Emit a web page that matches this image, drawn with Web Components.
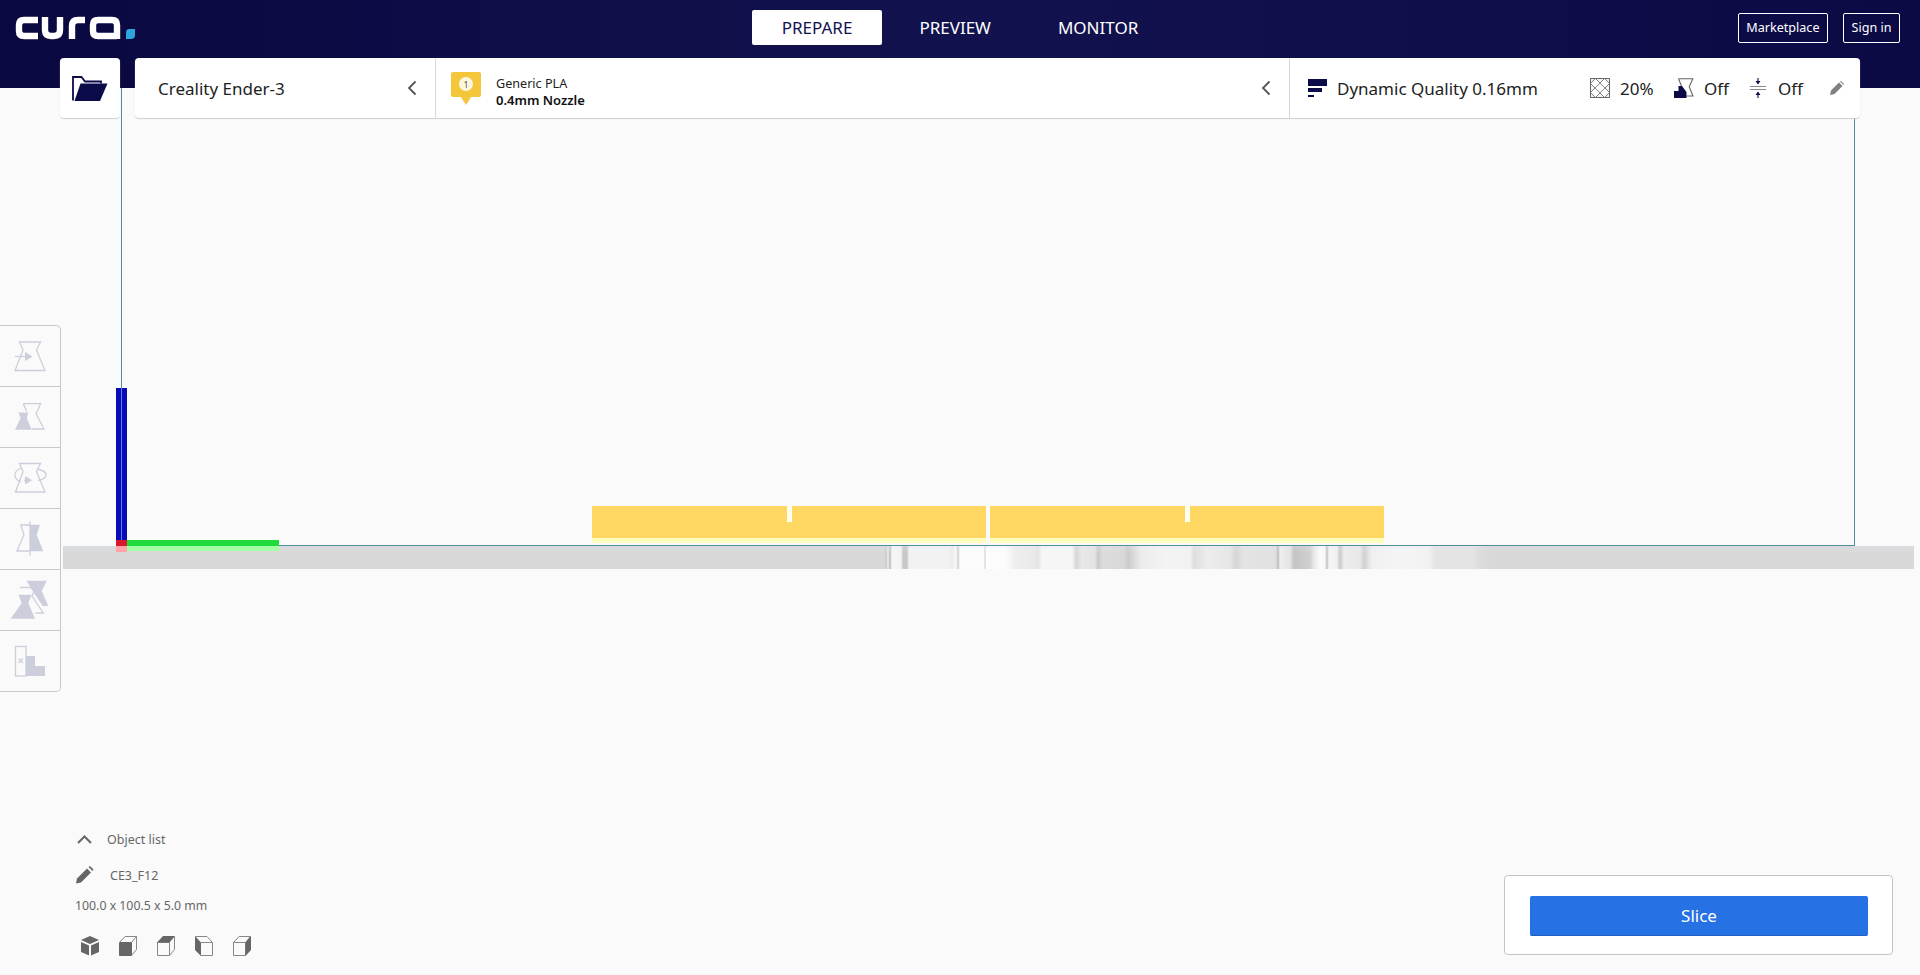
<!DOCTYPE html>
<html lang="en"><head><meta charset="utf-8"><title>Cura</title>
<style>
html,body{margin:0;height:100%;overflow:hidden;background:#fafafa;font-family:"Noto Sans","Open Sans",sans-serif}
</style></head><body>
<template id="t-app"><style>
:host{display:block;position:relative;width:100%;height:100vh;overflow:hidden;background:#fafafa;font-family:"Noto Sans","Open Sans",sans-serif}
</style><slot></slot></template>

<template id="t-header"><style>
:host{display:grid;grid-template-columns:1fr auto 1fr;align-items:start;height:88px;box-sizing:border-box;position:relative;background:linear-gradient(90deg,#09083f 0%,#12124f 50%,#0b0a45 100%)}
.logo{padding:16px 0 0 15px}
.nav{display:flex;gap:7px;padding-top:10px}
.acc{display:flex;justify-content:flex-end;gap:15px;padding:13px 20px 0 0}
</style><div class="logo"><slot name="logo"></slot></div><div class="nav"><slot name="nav"></slot></div><div class="acc"><slot name="account"></slot></div></template>

<template id="t-tab"><style>
:host{display:block;height:35px;line-height:35px;padding:0 30px;font-size:17px;color:#fff;border-radius:2px}
:host([active]){background:#fff;color:#12124f}
</style><slot></slot></template>

<template id="t-acc"><style>
:host{display:block;height:30px;line-height:28px;box-sizing:border-box;padding:0 7.5px;border:1px solid #fff;border-radius:2px;color:#fff;font-size:12.6px}
</style><slot></slot></template>

<template id="t-toolbar"><style>
:host{display:flex;position:relative;margin:-30px 0 0 60px;width:1800px;height:60px;gap:15px}
.open{width:60px;height:60px;box-sizing:border-box;background:#fff;border-radius:4px;box-shadow:0 1px 1px #d0d0d0;display:flex;align-items:center;justify-content:center}
.bar{width:1725px;height:60px;box-sizing:border-box;background:#fff;border-radius:4px;box-shadow:0 1px 1px #cfcfcf;display:flex}
</style><div class="open"><slot name="open"></slot></div><div class="bar"><slot></slot></div></template>

<template id="t-section"><style>
:host{display:flex;align-items:center;height:60px;box-sizing:border-box;color:#222}
:host([printer]){width:301px;padding:0 18px 0 23px;justify-content:space-between;font-size:17px;border-right:1px solid #d8d8d8}
:host([material]){width:854px;padding:0 18px 0 15px;justify-content:space-between;border-right:1px solid #d8d8d8}
:host([quality]){flex:1;padding:0 16px 0 18px}
</style><slot></slot></template>

<template id="t-material"><style>
:host{display:flex;align-items:center;gap:15px}
.t{display:flex;flex-direction:column;line-height:17.500px;color:#222;padding-top:8px}
.a{font-size:12.6px}
.n{font-size:13px;font-weight:600;color:#111}
</style><slot name="icon"></slot><div class="t"><span class="a"><slot name="a"></slot></span><span class="n"><slot name="b"></slot></span></div></template>

<template id="t-setting"><style>
:host{display:inline-flex;align-items:center;gap:var(--g,10px);font-size:17px;color:#222;white-space:nowrap}
</style><slot></slot></template>

<template id="t-viewport"><style>
:host{display:block;position:absolute;inset:0;overflow:hidden;background:#fafafa}
div{position:absolute}
.grid{left:63px;top:546px;width:1851px;height:23px}
.grid2{left:0;top:0;right:0;height:6px;background:linear-gradient(180deg,rgba(215,228,250,.22),rgba(255,250,235,.05))}
.vl{top:88px;width:1px;background:#4f8f96;height:458px}
.hl{left:121px;top:545px;width:1734px;height:1px;background:#4f8f96}
.bl{left:116px;top:388px;width:11px;height:152px;background:#0a0ab8}
.bl2{left:121px;top:388px;width:1px;height:152px;background:#5a7fe0}
.rd{left:116px;top:540px;width:11px;height:6px;background:#d81a2a}
.rd2{left:116px;top:546px;width:11px;height:6px;background:#ffa4a8}
.gr{left:127px;top:540px;width:152px;height:6px;background:#1fdc3c}
.gr2{left:127px;top:546px;width:152px;height:5px;background:#a4fca4}
.ye{top:506px;height:32px;background:#ffd763}
.ys{top:538px;height:5px;background:#fdfdc0}
.no{top:505px;height:17px;background:#fdfdf0}
</style>
<div class="grid" id="g"><div class="grid2"></div></div>
<div class="vl" style="left:121px"></div><div class="vl" style="left:1854px"></div>
<div class="ys" style="left:592px;width:394px"></div><div class="ys" style="left:990px;width:394px"></div>
<div class="ye" style="left:592px;width:394px"></div><div class="ye" style="left:990px;width:394px"></div>
<div class="no" style="left:787px;width:5px"></div><div class="no" style="left:1185px;width:5px"></div>
<div class="hl"></div>
<div class="bl"></div><div class="bl2"></div><div class="rd"></div><div class="rd2"></div><div class="gr"></div><div class="gr2"></div>
</template>

<template id="t-tools"><style>
:host{display:flex;flex-direction:column;position:absolute;left:0;top:325px;width:61px;box-sizing:border-box;background:#fafafa;border:1px solid #c9c9c9;border-left:0;border-radius:0 5px 5px 0}
</style><slot></slot></template>

<template id="t-tool"><style>
:host{display:block;height:61px;box-sizing:border-box;border-bottom:1px solid #c9c9c9;overflow:hidden}
:host(:last-child){border-bottom:0;height:60px}
</style><slot></slot></template>

<template id="t-info"><style>
:host{display:flex;flex-direction:column;position:absolute;left:75px;top:826px;width:220px;color:#666;font-size:12.5px}
.r{display:flex;align-items:center}
.a{height:26px;gap:15px;padding-left:2px}
.b{height:34px;margin-top:6px;gap:16px;padding-left:0}
.c{height:26px;margin-top:0;font-size:12.3px}
.d{gap:20px;padding-left:6px;margin-top:17px;height:22px}
</style>
<div class="r a"><slot name="chev"></slot><slot name="title"></slot></div>
<div class="r b"><slot name="pen"></slot><slot name="name"></slot></div>
<div class="r c"><slot name="dim"></slot></div>
<div class="r d"><slot name="cubes"></slot></div></template>

<template id="t-slice"><style>
:host{display:block;position:absolute;left:1504px;top:875px;width:389px;height:80px;box-sizing:border-box;padding:20px 25px;background:#fff;border:1px solid #c4c4c4;border-radius:4px}
.b{height:40px;line-height:39px;box-sizing:border-box;width:338px;text-align:center;color:#fff;font-size:17px;background:#2671e3;border-bottom:1px solid #1f5fc0;border-radius:2px}
</style><div class="b"><slot></slot></div></template>

<cura-app>
  <cura-viewport></cura-viewport>
  <cura-header>
    <svg slot="logo" width="122" height="26" viewBox="0 0 122 26" style="display:block"><g fill="none" stroke="#fff" stroke-width="6.400"><path d="M23 4H9Q4 4 4 9V15Q4 20 9 20H23"/><path d="M30 1V14Q30 20 36 20H39Q45 20 45 14V1"/><path d="M57 23V10Q57 4 63 4H70"/><path d="M102 23V9Q102 4 97 4H83Q78 4 78 9V15Q78 20 83 20H102"/></g><path d="M114 13H120V19Q120 23 116 23H111V17Q111 13 114 13Z" fill="#2da5e0"/></svg>
    <cura-tab slot="nav" active>PREPARE</cura-tab>
    <cura-tab slot="nav">PREVIEW</cura-tab>
    <cura-tab slot="nav">MONITOR</cura-tab>
    <cura-acc slot="account">Marketplace</cura-acc>
    <cura-acc slot="account">Sign in</cura-acc>
  </cura-header>
  <cura-toolbar>
    <svg slot="open" width="36" height="25" viewBox="0 0 36 25"><path d="M1 24.500V1H9.500L13 5.500H29V7.500" fill="none" stroke="#0c0b4a" stroke-width="1.800"/><path d="M2.500 25 8.500 7.500H35.500L28 25Z" fill="#0c0b4a"/></svg>
    <cura-section printer><span>Creality Ender-3</span><svg width="10" height="16" viewBox="0 0 10 16"><path d="M8.500 1.500 2 8l6.500 6.500" fill="none" stroke="#555" stroke-width="1.800"/></svg></cura-section>
    <cura-section material>
      <cura-material>
        <svg slot="icon" width="30" height="33" viewBox="0 0 30 33"><path d="M2 0H28Q30 0 30 2V23Q30 25 28 25H20L15 33 10 25H2Q0 25 0 23V2Q0 0 2 0Z" fill="#f4c63a"/><circle cx="15" cy="12" r="7" fill="#fdf6dc"/><text x="15" y="15.500" font-size="9" text-anchor="middle" fill="#555" font-family="Noto Sans">1</text></svg>
        <span slot="a">Generic PLA</span><span slot="b">0.4mm Nozzle</span>
      </cura-material>
      <svg width="10" height="16" viewBox="0 0 10 16"><path d="M8.500 1.500 2 8l6.500 6.500" fill="none" stroke="#555" stroke-width="1.800"/></svg>
    </cura-section>
    <cura-section quality>
      <cura-setting style="--g:10px;width:282px">
        <svg width="19" height="18" viewBox="0 0 19 18"><path d="M0 0H19V7H0ZM0 9H14V13H0ZM0 16H6V18H0Z" fill="#0c0b4a"/></svg><span>Dynamic Quality 0.16mm</span>
      </cura-setting>
      <cura-setting style="width:84px">
        <svg width="20" height="20" viewBox="0 0 20 20"><rect x=".5" y=".5" width="19" height="19" fill="#f4f4f4" stroke="#666"/><path d="M.5 5.500 5.500.5 10 5 14.500.5 19.500 5.500 15 10 19.500 14.500 14.500 19.500 10 15 5.500 19.500.5 14.500 5 10ZM5 10 10 5 15 10 10 15Z" fill="#fff" stroke="#666" stroke-width=".8"/></svg><span>20%</span>
      </cura-setting>
      <cura-setting style="width:76px">
        <svg width="20" height="20" viewBox="0 0 20 20"><path d="M4.500 .8H18.800L15.200 8.700 19 18H12.500M4.500 .8 7.500 8" fill="none" stroke="#666" stroke-width="1.100"/><path d="M0 20V13H4.500V8H8L12.500 14V20Z" fill="#0c0b4a"/></svg><span>Off</span>
      </cura-setting>
      <cura-setting style="--g:12px;width:80px">
        <svg width="16" height="20" viewBox="0 0 16 20"><path d="M0 8.500H16M0 11.500H16" stroke="#888" stroke-width="1.100"/><path d="M8 0V4M8 16V20" stroke="#0c0b4a" stroke-width="1.100"/><path d="M5.500 3 8 6.500 10.500 3ZM5.500 17 8 13.500 10.500 17Z" fill="#0c0b4a"/></svg><span>Off</span>
      </cura-setting>
      <svg width="14" height="14" viewBox="0 0 14 14" style="margin-left:auto"><path d="M0 14 1 9.500 9 1.500 12.500 5 4.500 13ZM10 .5 11 0 14 3 13.500 4Z" fill="#808080"/></svg>
    </cura-section>
  </cura-toolbar>
  <cura-tools>
    <cura-tool><svg width="60" height="60" viewBox="0 1 60 60" style="display:block" fill="none" stroke="#cdcedb" stroke-width="1.300"><path d="M19.500 17H40.500L36.500 25 45 45.500H15L23 25Z"/><path d="M15 31.500H29"/><path d="M25 27 32.500 31.500 25 36Z" fill="#cdcedb" stroke="none"/></svg></cura-tool>
    <cura-tool><svg width="60" height="60" viewBox="0 1 60 60" style="display:block" fill="none" stroke="#cdcedb" stroke-width="1.300"><path d="M23.300 17.700H40.700L36 27.700 44 43H31.700M23.300 17.700 26.700 25.400"/><path d="M18.300 26.400H28.300L26.700 32 31.700 43.700H15L20.700 32Z" fill="#cdcedb" stroke="none"/></svg></cura-tool>
    <cura-tool><svg width="60" height="60" viewBox="0 1 60 60" style="display:block" fill="none" stroke="#cdcedb" stroke-width="1.300"><path d="M19.500 16.500H40.500L36.500 24.500 45 45H15.500L23 24.500Z"/><path d="M21 21Q14.500 24 15 28.500 15.500 33 21 35M37 22Q46 24 46 27.500 46 32 38 33.500"/><path d="M24 33.300H27"/><path d="M25 29 32 33.300 25 37.500Z" fill="#cdcedb" stroke="none"/></svg></cura-tool>
    <cura-tool><svg width="60" height="60" viewBox="0 1 60 60" style="display:block" fill="none" stroke="#cdcedb" stroke-width="1.300"><path d="M30 17H20.700L24 26.700 17 43H30"/><path d="M30 16.700H40L36.700 26.700 43.300 43.300H30Z" fill="#cdcedb" stroke="none"/><path d="M30 13.500V47.500"/></svg></cura-tool>
    <cura-tool><svg width="60" height="60" viewBox="0 1 60 60" style="display:block" fill="none" stroke="#cdcedb" stroke-width="1.300"><path d="M26.700 11.700H46.700L41.700 22 48.300 37H42.700L36 27 30.700 19Z" fill="#cdcedb" stroke="none"/><path d="M19.800 18.500H36L32 27 43.300 44H35.500"/><path d="M18.300 25.700H31.700L28.300 34 35 49.700H10.700L21.700 34Z" fill="#cdcedb" stroke="none"/></svg></cura-tool>
    <cura-tool><svg width="60" height="60" viewBox="0 1 60 60" style="display:block" fill="none" stroke="#cdcedb" stroke-width="1.300"><rect x="15.500" y="16.500" width="10.500" height="29.500"/><path d="M18.500 28.500 23 33M23 28.500 18.500 33"/><path d="M26 26H35V36H45V46H26Z" fill="#cdcedb" stroke="none"/></svg></cura-tool>
  </cura-tools>
  <cura-info>
    <svg slot="chev" width="15" height="9" viewBox="0 0 15 9"><path d="M1 8 7.500 1.500 14 8" fill="none" stroke="#666" stroke-width="2"/></svg>
    <span slot="title">Object list</span>
    <svg slot="pen" width="19" height="18" viewBox="0 0 19 18"><path d="M1 17.500 2 12.500 12 2.500 16 6.500 6 16.500Z" fill="#666"/><path d="M13.500 1 15 0 18.500 3.500 17.500 5Z" fill="#666"/></svg>
    <span slot="name">CE3_F12</span>
    <span slot="dim">100.0 x 100.5 x 5.0 mm</span>
    <svg slot="cubes" width="18" height="20" viewBox="0 0 18 20"><path d="M9 0 18 4 9 8 0 4ZM0 6 8 9.500V19.500L0 16ZM18 6 10 9.500V19.500L18 16Z" fill="#666"/></svg>
    <svg slot="cubes" width="18" height="20" viewBox="0 0 18 20"><path d="M.5 6.500H12.500V19.500H.5Z" fill="#666" stroke="#666"/><path d="M.5 6.500 6 .5H17.500V13.500L12.500 19.500M12.500 6.500 17.500 .5" fill="none" stroke="#888"/></svg>
    <svg slot="cubes" width="18" height="20" viewBox="0 0 18 20"><path d="M.5 6.500H12.500V19.500H.5ZM12.500 19.500 17.500 13.500V.5" fill="none" stroke="#888"/><path d="M0 6.500 6 0H18L12.500 6.500Z" fill="#666"/></svg>
    <svg slot="cubes" width="18" height="20" viewBox="0 0 18 20"><path d="M0 0 6 6.500V20L0 14Z" fill="#666"/><path d="M6 6.500H17.500V19.500H6M.5 .5H12L17.500 6.500" fill="none" stroke="#888"/></svg>
    <svg slot="cubes" width="18" height="20" viewBox="0 0 18 20"><path d="M.5 6.500H12.500V19.500H.5ZM.5 6.500 6 .5H17.500L12.500 6.500" fill="none" stroke="#888"/><path d="M18 0V14L12.500 20V6.500Z" fill="#666"/></svg>
  </cura-info>
  <cura-slice>Slice</cura-slice>
</cura-app>
<script>
const base=id=>class extends HTMLElement{constructor(){super();this.attachShadow({mode:"open"}).appendChild(document.getElementById(id).content.cloneNode(true))}};
for(const [n,id] of [["cura-app","t-app"],["cura-header","t-header"],["cura-tab","t-tab"],["cura-acc","t-acc"],["cura-toolbar","t-toolbar"],["cura-section","t-section"],["cura-material","t-material"],["cura-setting","t-setting"],["cura-tools","t-tools"],["cura-tool","t-tool"],["cura-info","t-info"],["cura-slice","t-slice"]])customElements.define(n,base(id));
class V extends base("t-viewport"){connectedCallback(){
 // soft bands of the striped build-plate shadow: [x in page px, colour]
 const b=[[63,"#d8d8d8"],[885,"#d8d8d8"],[886,"#c8c8c8"],[888,"#eeeeee"],[890,"#bdbdbd"],[892,"#f6f6f6"],[901,"#f4f4f4"],[903,"#c8c8c8"],[907,"#c8c8c8"],[909,"#f2f2f2"],[948,"#f2f2f2"],[952,"#ebebeb"],[956,"#fafafa"],[958,"#d0d0d0"],[960,"#fcfcfc"],[984,"#fcfcfc"],[985,"#ccc"],[986,"#fdfdfd"],[1005,"#fdfdfd"],[1015,"#eeeeee"],[1033,"#eaeaea"],[1038,"#e4e4e4"],[1042,"#f6f6f6"],[1072,"#f6f6f6"],[1076,"#d6d6d6"],[1082,"#e8e8e8"],[1095,"#e4e4e4"],[1098,"#c9c9c9"],[1103,"#dcdcdc"],[1124,"#d8d8d8"],[1128,"#cbcbcb"],[1141,"#ececec"],[1165,"#f4f4f4"],[1190,"#f2f2f2"],[1194,"#dedede"],[1208,"#ededed"],[1230,"#e6e6e6"],[1236,"#d6d6d6"],[1244,"#e4e4e4"],[1276,"#e0e0e0"],[1278,"#bababa"],[1280,"#eeeeee"],[1290,"#e4e4e4"],[1294,"#c4c4c4"],[1310,"#d0d0d0"],[1314,"#e8e8e8"],[1320,"#fbfbfb"],[1325,"#f8f8f8"],[1327,"#c0c0c0"],[1329,"#f5f5f5"],[1337,"#f0f0f0"],[1340,"#c8c8c8"],[1344,"#ededed"],[1360,"#e8e8e8"],[1364,"#d0d0d0"],[1372,"#f0f0f0"],[1402,"#f5f5f5"],[1428,"#f2f2f2"],[1436,"#e4e4e4"],[1472,"#e4e4e4"],[1480,"#dcdcdc"],[1491,"#d8d8d8"],[1914,"#d8d8d8"]];
 this.shadowRoot.getElementById("g").style.background=`linear-gradient(90deg,${b.map(([x,c])=>`${c} ${x-63}px`).join(",")})`;
}}
customElements.define("cura-viewport",V);
</script>
</body></html>
